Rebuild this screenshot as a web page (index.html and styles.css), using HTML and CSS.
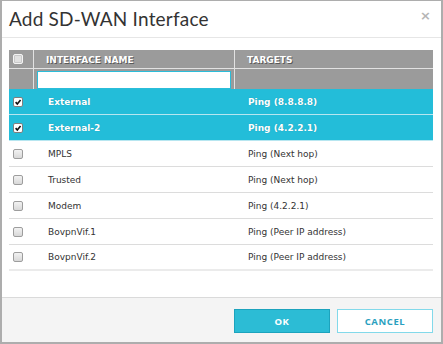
FILE: index.html
```html
<!DOCTYPE html>
<html lang="en">
<head>
  <meta charset="UTF-8">
  <title>Add SD-WAN Interface</title>
  <link rel="stylesheet" href="styles.css">
</head>
<body>
<div class="dialog">
  <div class="dialog-header">
    <h1>Add SD-WAN Interface</h1>
    <span class="close">&times;</span>
  </div>

  <div class="dialog-body">
    <table class="grid">
      <thead>
        <tr class="head-row">
          <th class="col-check"><span class="box head-box"></span></th>
          <th class="col-name">INTERFACE NAME</th>
          <th class="col-target">TARGETS</th>
        </tr>
        <tr class="filter-row">
          <th class="col-check"></th>
          <th class="col-name"><input type="text" class="filter"></th>
          <th class="col-target"></th>
        </tr>
      </thead>
      <tbody>
        <tr class="selected">
          <td class="col-check"><span class="box checked"><svg viewBox="0 0 10 10"><path d="M2 5.2 L4.1 7.4 L8.2 2.4" /></svg></span></td>
          <td class="col-name">External</td>
          <td class="col-target">Ping (8.8.8.8)</td>
        </tr>
        <tr class="selected">
          <td class="col-check"><span class="box checked"><svg viewBox="0 0 10 10"><path d="M2 5.2 L4.1 7.4 L8.2 2.4" /></svg></span></td>
          <td class="col-name">External-2</td>
          <td class="col-target">Ping (4.2.2.1)</td>
        </tr>
        <tr>
          <td class="col-check"><span class="box"></span></td>
          <td class="col-name">MPLS</td>
          <td class="col-target">Ping (Next hop)</td>
        </tr>
        <tr>
          <td class="col-check"><span class="box"></span></td>
          <td class="col-name">Trusted</td>
          <td class="col-target">Ping (Next hop)</td>
        </tr>
        <tr>
          <td class="col-check"><span class="box"></span></td>
          <td class="col-name">Modem</td>
          <td class="col-target">Ping (4.2.2.1)</td>
        </tr>
        <tr>
          <td class="col-check"><span class="box"></span></td>
          <td class="col-name">BovpnVif.1</td>
          <td class="col-target">Ping (Peer IP address)</td>
        </tr>
        <tr class="last">
          <td class="col-check"><span class="box"></span></td>
          <td class="col-name">BovpnVif.2</td>
          <td class="col-target">Ping (Peer IP address)</td>
        </tr>
      </tbody>
    </table>
  </div>

  <div class="dialog-footer">
    <button class="btn btn-ok">OK</button>
    <button class="btn btn-cancel">CANCEL</button>
  </div>
</div>
</body>
</html>
```

FILE: styles.css
```css
* {
    margin: 0;
    padding: 0;
    box-sizing: border-box;
}

body {
    background-color: #fff;
    font-family: 'DejaVu Sans', Verdana, sans-serif;
    color: #333;
}

.dialog {
    width: 443px;
    height: 344px;
    border: 2px solid #adadad;
    border-top-width: 1px;
    display: flex;
    flex-direction: column;
    background-color: #fff;
}

.dialog-header {
    height: 37px;
    border-bottom: 1px solid #e6e6e6;
    display: flex;
    justify-content: space-between;
    align-items: center;
    padding: 0 10px 2px 7px;
}

.dialog-header h1 {
    font-family: Lato, 'Open Sans', sans-serif;
    font-size: 19px;
    font-weight: 400;
    color: #333;
    letter-spacing: 0.2px;
}

.close {
    font-family: 'DejaVu Sans', sans-serif;
    font-size: 13px;
    font-weight: 700;
    color: #b5b5b5;
    margin-top: -6px;
}

.dialog-body {
    padding: 12px 8px 0 7px;
    flex: 1;
}

.grid {
    width: 424px;
    border-collapse: separate;
    border-spacing: 0;
    table-layout: fixed;
    font-size: 9px;
}

.col-check { width: 25px; }
.col-name { width: 201px; }

.grid th {
    background-color: #9b9b9b;
    color: #fff;
    font-weight: 700;
    text-align: left;
    text-shadow: 1px 1px 0 #5a5a5a;
    border-right: 1px solid #e2e2e2;
    border-bottom: 1px solid #e2e2e2;
    padding: 0 12px;
}

.grid th:last-child {
    border-right: none;
}

.grid th.col-check {
    padding: 0 0 0 4px;
}

.head-row th {
    height: 19px;
    padding-top: 1px;
}

.filter-row th {
    height: 20px;
    border-bottom: none;
}

.filter-row th.col-name {
    padding: 1px 3px 0 3px;
}

.filter {
    display: block;
    width: 100%;
    height: 18px;
    border: 1px solid #2bbdd9;
    background-color: #fff;
    outline: none;
}

.grid td {
    height: 26px;
    border-bottom: 1px solid #dcdcdc;
    padding: 0 14px;
    white-space: nowrap;
}

.grid td.col-check {
    padding: 0 0 0 4px;
}

.grid td.col-target {
    padding-left: 13px;
}

.grid tr.selected td {
    background-color: #23bdd9;
    color: #fff;
    font-weight: 700;
    border-bottom-color: #b7e6f0;
    text-shadow: 0 0 1px rgba(0, 80, 100, 0.4);
}

.grid tr.last td {
    border-bottom: 2px solid #ebebeb;
}

.box {
    display: block;
    width: 10px;
    height: 10px;
    border: 1px solid #9d9d9d;
    border-radius: 2px;
    background: linear-gradient(#f2f2f2, #d8d8d8);
}

.box.checked {
    background: #fff;
    border-color: #7f7f7f;
}

.box svg {
    display: block;
    width: 8px;
    height: 8px;
}

.box svg path {
    fill: none;
    stroke: #111;
    stroke-width: 2;
}

.head-box {
    background: #e2e2e2;
    border: 1px solid #f4f4f4;
    box-shadow: inset 0 0 0 1px #c9c9c9;
}

.dialog-footer {
    height: 45px;
    border-top: 1px solid #dadada;
    background-color: #f4f4f4;
    display: flex;
    justify-content: flex-end;
    gap: 7px;
    padding: 11px 8px 0 0;
}

.btn {
    width: 96px;
    height: 24px;
    font-family: 'Open Sans', sans-serif;
    font-size: 9.5px;
    font-weight: 700;
    letter-spacing: 0.6px;
    cursor: pointer;
}

.btn-ok {
    background-color: #2cbcd5;
    border: 1px solid #1ca3bd;
    color: #fff;
}

.btn-cancel {
    background-color: #fff;
    border: 1px solid #82d9ea;
    color: #2a9fc0;
}
```
